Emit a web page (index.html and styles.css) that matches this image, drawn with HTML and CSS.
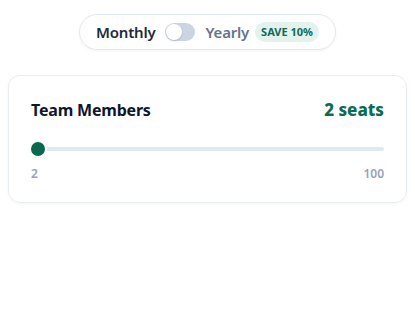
FILE: index.html
```html
<!DOCTYPE html>
<html>
<head>
<meta charset="utf-8">
<link rel="stylesheet" href="styles.css">
</head>
<body>
<div class="billing">
  <div class="pill">
    <span class="opt active">Monthly</span>
    <span class="toggle"><span class="knob"></span></span>
    <span class="opt">Yearly</span>
    <span class="badge">SAVE 10%</span>
  </div>
</div>
<div class="card">
  <div class="head">
    <span class="title">Team Members</span>
    <span class="seats">2 seats</span>
  </div>
  <div class="slider">
    <div class="track"></div>
    <div class="thumb"></div>
  </div>
  <div class="range">
    <span>2</span>
    <span>100</span>
  </div>
</div>
</body>
</html>
```
FILE: styles.css
```css
* { box-sizing: border-box; }
html, body { margin: 0; background: #fff; }
body {
  padding: 14px 8px 8px;
  font-family: "Noto Sans", "Open Sans", sans-serif;
  color: #1e293b;
}
.billing { display: flex; justify-content: center; }
.pill {
  display: flex;
  align-items: center;
  gap: 10px;
  height: 36px;
  padding: 0 16px;
  border: 1px solid #e2e8f0;
  border-radius: 18px;
  box-shadow: 0 1px 3px rgba(15, 23, 42, 0.05);
}
.opt { font-size: 15px; font-weight: 600; color: #64748b; letter-spacing: -0.2px; }
.opt.active { color: #1e293b; }
.toggle {
  width: 30px;
  height: 18px;
  border-radius: 9px;
  background: #cbd5e1;
  padding: 1px;
  display: flex;
}
.knob {
  width: 16px;
  height: 16px;
  border-radius: 50%;
  background: #fff;
  box-shadow: 0 1px 2px rgba(0,0,0,0.15);
}
.badge {
  margin-left: -4px;
  font-size: 11px;
  font-weight: 700;
  color: #0f6b55;
  background: #e3f2ec;
  border-radius: 10px;
  padding: 3px 6px;
  line-height: 14px;
}
.card {
  margin-top: 25px;
  border: 1px solid #e8edf3;
  border-radius: 12px;
  padding: 22px 22px 20px;
  box-shadow: 0 1px 3px rgba(15, 23, 42, 0.04);
}
.head { display: flex; justify-content: space-between; align-items: baseline; }
.title { font-size: 16px; font-weight: 700; color: #0f172a; letter-spacing: -0.2px; }
.seats { font-size: 17px; font-weight: 800; color: #0b6b53; }
.slider { position: relative; margin-top: 21px; height: 14px; display: flex; align-items: center; }
.track { flex: 1; height: 4px; border-radius: 2px; background: #e2e8f0; }
.thumb {
  position: absolute;
  left: 0;
  top: 0;
  width: 14px;
  height: 14px;
  border-radius: 50%;
  background: #08694f;
  box-shadow: 0 0 0 2px #fff, 0 1px 3px rgba(0,0,0,0.2);
}
.range {
  display: flex;
  justify-content: space-between;
  margin-top: 9px;
  font-size: 12px;
  font-weight: 600;
  color: #94a3b8;
}
```
